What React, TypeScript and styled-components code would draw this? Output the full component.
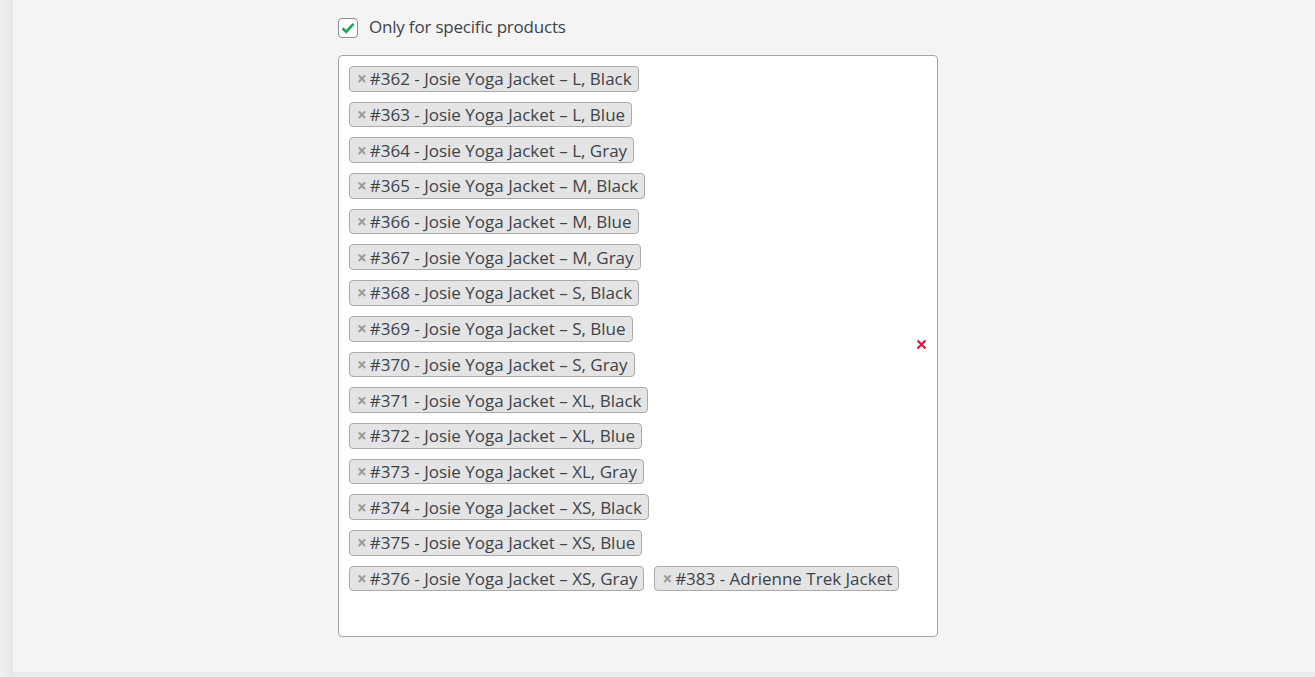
import React from 'react';
import styled, { createGlobalStyle } from 'styled-components';

const GlobalStyle = createGlobalStyle`
  html, body {
    margin: 0;
    padding: 0;
    background: #ededed;
  }
  * {
    box-sizing: border-box;
  }
`;

const products = [
  '#362 - Josie Yoga Jacket – L, Black',
  '#363 - Josie Yoga Jacket – L, Blue',
  '#364 - Josie Yoga Jacket – L, Gray',
  '#365 - Josie Yoga Jacket – M, Black',
  '#366 - Josie Yoga Jacket – M, Blue',
  '#367 - Josie Yoga Jacket – M, Gray',
  '#368 - Josie Yoga Jacket – S, Black',
  '#369 - Josie Yoga Jacket – S, Blue',
  '#370 - Josie Yoga Jacket – S, Gray',
  '#371 - Josie Yoga Jacket – XL, Black',
  '#372 - Josie Yoga Jacket – XL, Blue',
  '#373 - Josie Yoga Jacket – XL, Gray',
  '#374 - Josie Yoga Jacket – XS, Black',
  '#375 - Josie Yoga Jacket – XS, Blue',
  '#376 - Josie Yoga Jacket – XS, Gray',
  '#383 - Adrienne Trek Jacket',
];

const App = () => (
  <>
    <GlobalStyle />
    <Page>
      <Panel>
        <CheckRow>
          <CheckBox>
            <svg width="14" height="12" viewBox="0 0 14 12">
              <path d="M1.5 6.2 L5.2 9.8 L12.5 1.8" fill="none" stroke="#1ea656" strokeWidth="2.6" />
            </svg>
          </CheckBox>
          <CheckLabel>Only for specific products</CheckLabel>
        </CheckRow>
        <SelectBox>
          {products.map(p => (
            <Tag key={p}>
              <TagRemove>×</TagRemove>
              {p}
            </Tag>
          ))}
          <ClearAll>
            <svg width="11" height="11" viewBox="0 0 11 11">
              <path d="M1.5 1.5 L9.5 9.5 M9.5 1.5 L1.5 9.5" stroke="#e3173e" strokeWidth="2.2" />
            </svg>
          </ClearAll>
        </SelectBox>
      </Panel>
    </Page>
  </>
);

const Page = styled.div`
  display: flex;
  height: 677px;
  padding-left: 13px;
  padding-bottom: 5px;
  background: linear-gradient(to right, #efefef 0, #e9e9e9 13px, #ededed 13px);
  font-family: 'Open Sans', 'Noto Sans', sans-serif;
`;

const Panel = styled.div`
  flex: 1;
  background: #f4f4f4;
  padding: 18px 0 0 325px;
  box-shadow: -3px 0 5px rgba(0, 0, 0, 0.03);
`;

const CheckRow = styled.label`
  display: flex;
  align-items: center;
  gap: 11px;
  height: 20px;
`;

const CheckBox = styled.span`
  width: 20px;
  height: 20px;
  background: #fff;
  border: 1px solid #8c8f94;
  border-radius: 4px;
  display: flex;
  align-items: center;
  justify-content: center;
`;

const CheckLabel = styled.span`
  font-size: 17px;
  line-height: 20px;
  margin-top: -2px;
  color: #3c434a;
  letter-spacing: -0.2px;
`;

const SelectBox = styled.div`
  position: relative;
  margin-top: 17px;
  width: 600px;
  height: 582px;
  background: #fff;
  border: 1px solid #a7a7a7;
  border-radius: 4px;
  padding: 10px 25px 10px 10px;
  display: flex;
  flex-wrap: wrap;
  align-content: flex-start;
  column-gap: 10px;
  row-gap: 10px;
`;

const Tag = styled.span`
  display: inline-flex;
  align-items: center;
  height: 25.7px;
  padding: 0 6px 0 7px;
  background: #e4e4e4;
  border: 1px solid #aaa;
  border-radius: 4px;
  font-size: 17px;
  color: #3c434a;
  white-space: nowrap;
`;

const TagRemove = styled.span`
  color: #999;
  font-size: 17px;
  font-weight: 700;
  margin-right: 3px;
`;

const ClearAll = styled.span`
  position: absolute;
  right: 10px;
  top: 283px;
  display: flex;
`;

export default App;
